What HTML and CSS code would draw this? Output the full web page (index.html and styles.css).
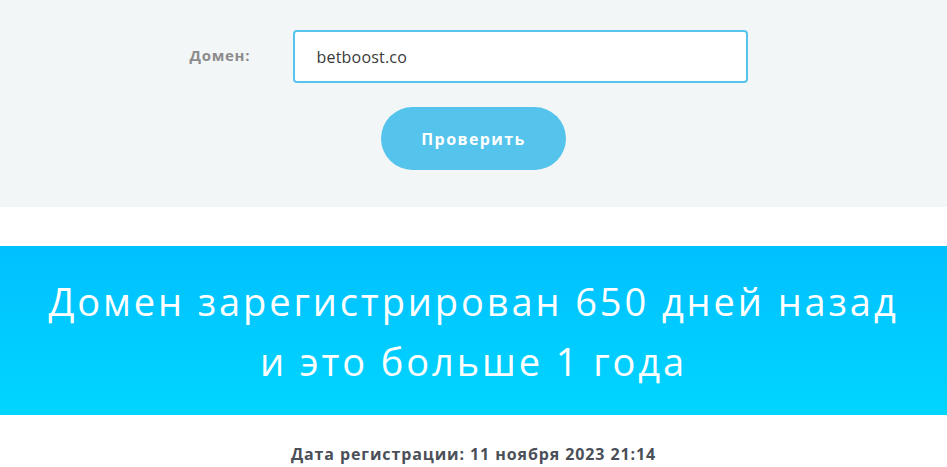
FILE: index.html
```html
<!DOCTYPE html>
<html lang="ru">
<head>
  <meta charset="UTF-8" />
  <title>Проверка возраста домена</title>
  <link rel="stylesheet" href="styles.css">
</head>
<body>
  <section class="check">
    <form class="check-form" onsubmit="return false;">
      <div class="row">
        <label for="domain">Домен:</label>
        <input type="text" id="domain" name="domain" value="betboost.co" />
      </div>
      <button type="submit">Проверить</button>
    </form>
  </section>

  <section class="result">
    <h1>Домен зарегистрирован 650 дней назад<br>и это больше 1 года</h1>
  </section>

  <p class="reg-date">Дата регистрации: 11 ноября 2023 21:14</p>
</body>
</html>
```

FILE: styles.css
```css
body {
  margin: 0;
  font-family: 'Open Sans', 'Noto Sans', sans-serif;
  background: #fff;
}
.check {
  background-color: #f3f6f7;
  height: 207px;
  padding-top: 30px;
  box-sizing: border-box;
}
.check-form {
  display: flex;
  flex-direction: column;
  align-items: center;
}
.row {
  display: flex;
  align-items: center;
  margin-right: 10px;
}
label {
  width: 103px;
  font-weight: bold;
  font-size: 15px;
  letter-spacing: 0.7px;
  color: #8c8c8c;
  padding-bottom: 3px;
}
input {
  width: 455px;
  height: 53px;
  box-sizing: border-box;
  border: 2px solid #56c5ed;
  border-radius: 4px;
  padding: 0 22px;
  font-family: inherit;
  font-size: 16px;
  letter-spacing: 0.2px;
  color: #3a3a3a;
  background: #fff;
  outline: none;
}
button {
  margin-top: 24px;
  width: 185px;
  height: 63px;
  border: none;
  border-radius: 32px;
  background-color: #55c4ec;
  color: #fff;
  font-family: inherit;
  font-weight: bold;
  font-size: 16px;
  letter-spacing: 1.4px;
  cursor: pointer;
}
.result {
  margin-top: 39px;
  height: 169px;
  background: linear-gradient(to bottom, #00c0ff, #00d5ff);
  display: flex;
  align-items: center;
  justify-content: center;
}
h1 {
  margin: 0;
  text-align: center;
  color: #fff;
  font-weight: normal;
  font-size: 38px;
  line-height: 60px;
  letter-spacing: 2.9px;
}
.reg-date {
  margin: 28px 0 0;
  text-align: center;
  font-weight: bold;
  font-size: 16px;
  letter-spacing: 0.9px;
  color: #4b4f58;
}
```
